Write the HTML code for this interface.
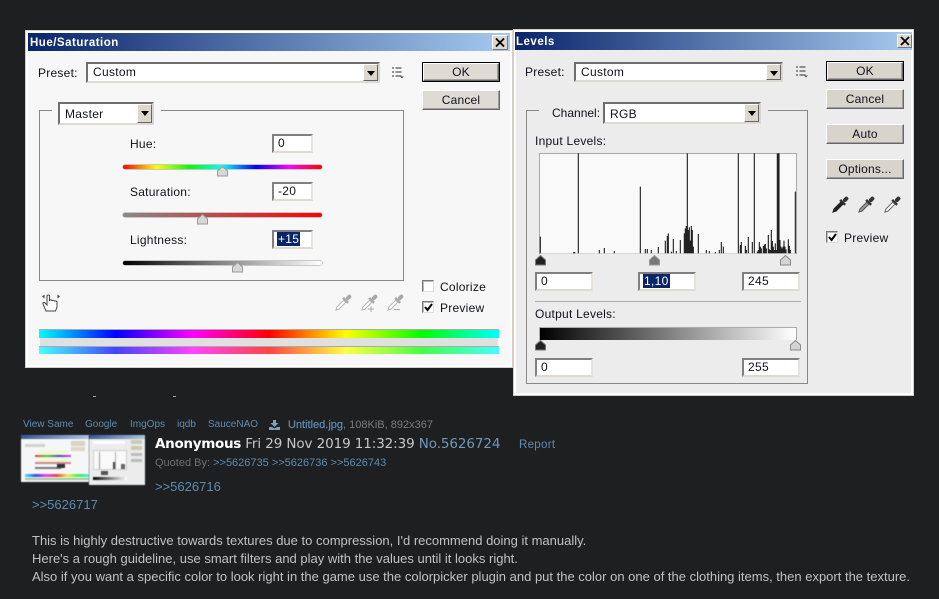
<!DOCTYPE html>
<html><head><meta charset="utf-8"><style>
html,body{margin:0;padding:0;background:#1d1f21;width:939px;height:599px;overflow:hidden}
div,span,svg{position:absolute;box-sizing:border-box}
span.i{position:static}
.t{font:12px/14px "Liberation Sans",sans-serif;color:#10101c;white-space:nowrap;letter-spacing:.25px}
.dlg{border:1px solid #fff;outline:1px solid #d4d0c8}
.title{background:linear-gradient(90deg,#0a246a,#a6caf0);color:#fff;font:bold 11.5px/20px "Liberation Sans",sans-serif;padding-left:2px;letter-spacing:.5px}
.inp{background:#fff;border:2px solid;border-color:#808080 #e6e4dc #dcdad2 #808080;font:12px/15px "Liberation Sans",sans-serif;color:#10101c;padding-left:4px;letter-spacing:.3px}
.sel{background:#fff;border:2px solid;border-color:#6e6e6e #d8d6ce #dcdad2 #6e6e6e;font:12px/17px "Liberation Sans",sans-serif;color:#10101c;padding-left:5px;letter-spacing:.3px}
.arr{right:0;top:0;bottom:0;width:15px;background:#dcd8d0;border:1px solid;border-color:#fff #666 #666 #fff}
.arr:after{content:"";position:absolute;left:3px;top:6px;border:4px solid transparent;border-top:5px solid #000;border-bottom:0}
.btn{background:#dedad4;border:1px solid;border-color:#fff #666 #666 #fff;font:12px/18px "Liberation Sans",sans-serif;color:#10101c;text-align:center;letter-spacing:.2px;box-shadow:inset -1px -1px 0 #a0a0a0}
.def{outline:1px solid #000;line-height:16px}
.x{background:#dcd8d0;border:1px solid;border-color:#fff #777 #777 #fff}
.chk{width:12px;height:12px;background:#fff;border:1px solid;border-color:#777 #ddd #ddd #777;box-shadow:inset 1px 1px 0 #bbb}
.sl{height:4px;border-radius:2px;box-shadow:0 0 0 .5px #999}
.f{background:#888}
.p{font:12px/14px "Liberation Sans",sans-serif;white-space:nowrap}
.l{color:#5f8bb0}
</style></head><body>

<!-- Hue/Saturation -->
<div class="dlg" style="left:26px;top:31px;width:486px;height:336px;background:#f7f7f7;border-width:2px"></div>
<div class="title" style="left:28px;top:33px;width:482px;height:18px">Hue/Saturation</div>
<div class="x" style="left:492px;top:35px;width:16px;height:15px"><svg style="left:2px;top:1px" width="10" height="11"><path d="M1 1.500L9 9.500M9 1.500L1 9.500" stroke="#000" stroke-width="1.800"/></svg></div>
<div class="t" style="left:38px;top:66px">Preset:</div>
<div class="sel" style="left:86px;top:62px;width:294px;height:21px">Custom<div class="arr"></div></div>
<svg style="left:391px;top:66px" width="14" height="13"><path d="M1 2h2M1 6h2M1 10h2M4.500 2h6M4.500 6h6M4.500 10h6" stroke="#555" stroke-width="1.300"/><path d="M9 10.500h4l-2 2z" fill="#555"/></svg>
<div class="btn def" style="left:423px;top:63px;width:76px;height:18px">OK</div>
<div class="btn" style="left:422px;top:90px;width:78px;height:20px">Cancel</div>

<div class="f" style="left:39px;top:110px;width:1px;height:171px"></div>
<div class="f" style="left:39px;top:280px;width:365px;height:1px"></div>
<div class="f" style="left:403px;top:110px;width:1px;height:171px"></div>
<div class="f" style="left:39px;top:110px;width:13px;height:1px"></div>
<div class="f" style="left:161px;top:110px;width:243px;height:1px"></div>
<div class="sel" style="left:58px;top:102px;width:96px;height:23px;line-height:20px">Master<div class="arr"></div></div>

<div class="t" style="left:130px;top:137px">Hue:</div>
<div class="inp" style="left:272px;top:134px;width:41px;height:19px">0</div>
<div class="sl" style="left:123px;top:165px;width:199px;background:linear-gradient(90deg,#f00,#ff0,#0f0,#0ff,#00f,#f0f,#f00)"></div>
<svg style="left:217px;top:166px" width="11" height="11"><path d="M.5 5L5.500.5 10.500 5V10H.5z" fill="#d8d8d8" stroke="#9a9a9a"/></svg>

<div class="t" style="left:130px;top:185px">Saturation:</div>
<div class="inp" style="left:272px;top:182px;width:41px;height:19px">-20</div>
<div class="sl" style="left:123px;top:213px;width:199px;background:linear-gradient(90deg,#888,#f00)"></div>
<svg style="left:197px;top:214px" width="11" height="11"><path d="M.5 5L5.500.5 10.500 5V10H.5z" fill="#d8d8d8" stroke="#9a9a9a"/></svg>

<div class="t" style="left:130px;top:233px">Lightness:</div>
<div class="inp" style="left:272px;top:230px;width:41px;height:19px;padding-left:3px"><span style="position:static;background:#0a246a;color:#fff;padding:0 1px">+15</span></div>
<div class="sl" style="left:123px;top:261px;width:199px;background:linear-gradient(90deg,#000,#888 50%,#fff)"></div>
<svg style="left:232px;top:262px" width="11" height="11"><path d="M.5 5L5.500.5 10.500 5V10H.5z" fill="#d8d8d8" stroke="#9a9a9a"/></svg>

<svg style="left:41px;top:293px" width="20" height="20"><path d="M1 3.500L3.500 1.500V5.500zM19 3.500L16.500 1.500V5.500z" fill="#444"/><path d="M5 18L2 11c-.5-1.500 1-2 2-1l2 2V3.500c0-2 2.500-2 2.500 0V8c0-1.500 2.500-1.500 2.500 0 0-1 2.500-1 2.500.5 0-.8 2.500-.8 2.500 1V14l-1.500 4z" fill="#fff" stroke="#444"/></svg>

<svg style="left:334px;top:294px" width="18" height="18"><g transform="rotate(45 9 9)"><rect x="7" y="-2" width="4" height="6" rx="2" fill="#a8a8a8"/><rect x="5.500" y="4" width="7" height="2.500" fill="#a8a8a8"/><path d="M7.500 6.500V16L9 19l1.500-3V6.500z" fill="#fff" stroke="#b4b4b4"/></g></svg>
<svg style="left:360px;top:294px" width="18" height="18"><g transform="rotate(45 9 9)"><rect x="7" y="-2" width="4" height="6" rx="2" fill="#a8a8a8"/><rect x="5.500" y="4" width="7" height="2.500" fill="#a8a8a8"/><path d="M7.500 6.500V16L9 19l1.500-3V6.500z" fill="#fff" stroke="#b4b4b4"/></g><path d="M8 15h6M11 12.500v5.500" stroke="#a8a8a8"/></svg>
<svg style="left:386px;top:294px" width="18" height="18"><g transform="rotate(45 9 9)"><rect x="7" y="-2" width="4" height="6" rx="2" fill="#a8a8a8"/><rect x="5.500" y="4" width="7" height="2.500" fill="#a8a8a8"/><path d="M7.500 6.500V16L9 19l1.500-3V6.500z" fill="#fff" stroke="#b4b4b4"/></g><path d="M8 15.500h6" stroke="#a8a8a8"/></svg>

<div class="chk" style="left:422px;top:280px"></div>
<div class="t" style="left:440px;top:280px">Colorize</div>
<div class="chk" style="left:422px;top:301px"></div>
<svg style="left:423px;top:302px" width="11" height="11"><path d="M2 5l2.500 3L9 2" fill="none" stroke="#000" stroke-width="2"/></svg>
<div class="t" style="left:440px;top:301px">Preview</div>

<div style="left:39px;top:329px;width:460px;height:9px;border-top:1px solid #aaa;background:linear-gradient(90deg,#0ff,#00f,#f0f,#f00,#ff0,#0f0,#0ff)"></div>
<div style="left:40px;top:338px;width:458px;height:8px;background:#e0e0e0"></div>
<div style="left:39px;top:346px;width:460px;height:8px;border-top:1px solid #aaa;background:linear-gradient(90deg,#4ff,#44f,#f4f,#f44,#ff4,#4f4,#4ff)"></div>

<!-- Levels -->
<div class="dlg" style="left:514px;top:30px;width:399px;height:365px;background:#ececec;border-width:2px"></div>
<div class="title" style="left:515px;top:32px;width:397px;height:18px;padding-left:1px">Levels</div>
<div class="x" style="left:897px;top:34px;width:15px;height:14px"><svg style="left:2px;top:1px" width="10" height="10"><path d="M1 1L9 9M9 1L1 9" stroke="#000" stroke-width="1.800"/></svg></div>
<div class="t" style="left:525px;top:65px">Preset:</div>
<div class="sel" style="left:574px;top:62px;width:209px;height:20px">Custom<div class="arr"></div></div>
<svg style="left:795px;top:65px" width="14" height="13"><path d="M1 2h2M1 6h2M1 10h2M4.500 2h6M4.500 6h6M4.500 10h6" stroke="#555" stroke-width="1.300"/><path d="M9 10.500h4l-2 2z" fill="#555"/></svg>

<div class="f" style="left:526px;top:110px;width:1px;height:274px"></div>
<div class="f" style="left:526px;top:383px;width:282px;height:1px"></div>
<div class="f" style="left:807px;top:110px;width:1px;height:274px"></div>
<div class="f" style="left:526px;top:110px;width:13px;height:1px"></div>
<div class="f" style="left:768px;top:110px;width:40px;height:1px"></div>
<div class="t" style="left:552px;top:106px;letter-spacing:0">Channel:</div>
<div class="sel" style="left:603px;top:102px;width:158px;height:22px;line-height:20px">RGB<div class="arr"></div></div>
<div class="t" style="left:535px;top:134px">Input Levels:</div>

<div style="left:539px;top:153px;width:258px;height:101px;background:#f9f9f9;border:1px solid #aaa;border-bottom:0"></div>
<svg style="left:530px;top:150px" width="280" height="145" viewBox="0 0 840 435"><path stroke="#222" stroke-width="3.400" fill="none" d="M31 260V310M131 306V310M134 306V310M145 10V310M208 300V310M223 294V310M253 303V310M331 110V310M346 297V310M352 297V310M364 300V310M385 291V310M406 272V310M412 258V310M415 250V310M424 305V310M430 267V310M439 303V310M451 270V310M463 250V310M466 235V310M469 228V310M472 10V310M475 240V310M478 232V310M481 272V310M484 228V310M487 240V310M490 290V310M505 252V310M529 300V310M538 303V310M556 306V310M568 300V310M574 276V310M580 290V310M625 10V310M631 285V310M634 276V310M646 288V310M649 300V310M655 261V310M667 276V310M673 10V310M682 305V310M685 300V310M688 276V310M691 290V310M694 295V310M700 288V310M703 284V310M706 282V310M709 295V310M715 255V310M718 298V310M721 300V310M724 240V310M727 273V310M730 290V310M733 300V310M736 280V310M739 300V310M742 10V310M745 10V310M747 10V310M750 270V310M753 290V310M756 295V310M759 290V310M762 272V310M765 290V310M768 298V310M775 268V310M778 288V310M781 300V310M796 125V310"/><path stroke="#999" stroke-width="1" d="M28 310.500H800"/></svg>

<svg style="left:535px;top:255px" width="11" height="11"><path d="M.5 5L5.500.5 10.500 5V10H.5z" fill="#222" stroke="#777"/></svg>
<svg style="left:649px;top:255px" width="11" height="11"><path d="M.5 5L5.500.5 10.500 5V10H.5z" fill="#777" stroke="#999"/></svg>
<svg style="left:780px;top:255px" width="11" height="11"><path d="M.5 5L5.500.5 10.500 5V10H.5z" fill="#d4d4d4" stroke="#8a8a8a"/></svg>

<div class="inp" style="left:535px;top:272px;width:58px;height:19px">0</div>
<div class="inp" style="left:638px;top:272px;width:58px;height:19px;padding-left:3px"><span style="position:static;background:#0a246a;color:#fff;padding:0 1px">1,10</span></div>
<div class="inp" style="left:742px;top:272px;width:58px;height:19px">245</div>
<div style="left:535px;top:301px;width:266px;height:1px;background:#aaa"></div>
<div class="t" style="left:535px;top:307px">Output Levels:</div>
<div style="left:539px;top:327px;width:258px;height:13px;border:1px solid #aaa;border-bottom:0;background:linear-gradient(90deg,#000,#fff)"></div>
<svg style="left:535px;top:340px" width="11" height="11"><path d="M.5 5L5.500.5 10.500 5V10H.5z" fill="#222" stroke="#777"/></svg>
<svg style="left:790px;top:340px" width="11" height="11"><path d="M.5 5L5.500.5 10.500 5V10H.5z" fill="#d4d4d4" stroke="#8a8a8a"/></svg>
<div class="inp" style="left:535px;top:358px;width:58px;height:19px">0</div>
<div class="inp" style="left:742px;top:358px;width:58px;height:19px">255</div>

<div class="btn def" style="left:827px;top:62px;width:76px;height:18px;background:#d8d4cc">OK</div>
<div class="btn" style="left:826px;top:89px;width:78px;height:20px;background:#d8d4cc">Cancel</div>
<div class="btn" style="left:826px;top:124px;width:78px;height:20px;background:#d8d4cc">Auto</div>
<div class="btn" style="left:826px;top:159px;width:78px;height:20px;background:#d8d4cc">Options...</div>
<svg style="left:831px;top:196px" width="18" height="18"><g transform="rotate(45 9 9)"><rect x="7" y="-2" width="4" height="6" rx="2" fill="#333"/><rect x="5.500" y="4" width="7" height="2.500" fill="#333"/><path d="M7.500 6.500V16L9 19l1.500-3V6.500z" fill="#222" stroke="#222"/></g></svg>
<svg style="left:857px;top:196px" width="18" height="18"><g transform="rotate(45 9 9)"><rect x="7" y="-2" width="4" height="6" rx="2" fill="#333"/><rect x="5.500" y="4" width="7" height="2.500" fill="#333"/><path d="M7.500 6.500V16L9 19l1.500-3V6.500z" fill="#999" stroke="#555"/></g></svg>
<svg style="left:883px;top:196px" width="18" height="18"><g transform="rotate(45 9 9)"><rect x="7" y="-2" width="4" height="6" rx="2" fill="#333"/><rect x="5.500" y="4" width="7" height="2.500" fill="#333"/><path d="M7.500 6.500V16L9 19l1.500-3V6.500z" fill="#fff" stroke="#666"/></g></svg>
<div class="chk" style="left:826px;top:231px"></div>
<svg style="left:827px;top:232px" width="11" height="11"><path d="M2 5l2.500 3L9 2" fill="none" stroke="#000" stroke-width="2"/></svg>
<div class="t" style="left:844px;top:231px">Preview</div>

<!-- specks -->
<div style="left:93px;top:396px;width:3px;height:1px;background:#aaa"></div>
<div style="left:173px;top:396px;width:3px;height:1px;background:#aaa"></div>

<!-- post -->
<div class="p l" style="left:23px;top:418px;font-size:10px">View Same</div>
<div class="p l" style="left:85px;top:418px;font-size:10px">Google</div>
<div class="p l" style="left:130px;top:418px;font-size:10px">ImgOps</div>
<div class="p l" style="left:177px;top:418px;font-size:10px">iqdb</div>
<div class="p l" style="left:208px;top:418px;font-size:10px">SauceNAO</div>
<svg style="left:269px;top:420px" width="11" height="10"><path d="M4 0h3v3h2.500L5.500 7 1.500 3H4zM0 7h3l2.500 1.500L8 7h3v3H0z" fill="#7f9fba"/></svg>
<div class="p" style="left:288px;top:418px;font-size:11px;color:#7a7d7f"><span class="i" style="color:#5f8bb0;-webkit-text-stroke:.2px #5f8bb0">Untitled.jpg</span>, 108KiB, 892x367</div>

<!-- thumb -->
<div style="left:21px;top:435px;width:68px;height:47px;background:#f4f6f8;overflow:hidden;filter:blur(.5px)">
 <div style="left:0;top:0;width:68px;height:4px;background:linear-gradient(90deg,#38588f,#a9c4e4)"></div>
 <div style="left:4px;top:9px;width:20px;height:3px;background:#cfd4c8"></div>
 <div style="left:50px;top:6px;width:14px;height:5px;background:#d8d4c0"></div>
 <div style="left:50px;top:12px;width:14px;height:4px;background:#ddd8c8"></div>
 <div style="left:16px;top:15px;width:30px;height:12px;background:#f4f6d8"></div>
 <div style="left:14px;top:20px;width:36px;height:2px;background:linear-gradient(90deg,#d44,#4c4,#44d,#d4d)"></div>
 <div style="left:14px;top:27px;width:36px;height:2px;background:#c88"></div>
 <div style="left:14px;top:32px;width:26px;height:2px;background:#777"></div>
 <div style="left:36px;top:29px;width:8px;height:4px;background:#333"></div>
 <div style="left:4px;top:39px;width:64px;height:3px;background:linear-gradient(90deg,#4ee,#44e,#e4e,#e44,#ee4,#4e4,#4ee)"></div>
 <div style="left:4px;top:43px;width:64px;height:2px;background:#9c9"></div>
</div>
<div style="left:89px;top:435px;width:56px;height:50px;background:#ececec;overflow:hidden;filter:blur(.5px)">
 <div style="left:0;top:0;width:56px;height:4px;background:linear-gradient(90deg,#38588f,#a9c4e4)"></div>
 <div style="left:4px;top:6px;width:32px;height:3px;background:#fff"></div>
 <div style="left:42px;top:5px;width:11px;height:4px;background:#cdc8b0"></div>
 <div style="left:42px;top:11px;width:11px;height:4px;background:#cdc8b0"></div>
 <div style="left:42px;top:18px;width:11px;height:3px;background:#bbb"></div>
 <div style="left:42px;top:24px;width:11px;height:3px;background:#bbb"></div>
 <div style="left:4px;top:15px;width:34px;height:20px;background:#f9f9f9;border:1px solid #ccc"></div>
 <div style="left:24px;top:27px;width:3px;height:7px;background:#444"></div>
 <div style="left:32px;top:29px;width:4px;height:5px;background:#666"></div>
 <div style="left:10px;top:17px;width:1px;height:17px;background:#999"></div>
 <div style="left:26px;top:17px;width:1px;height:17px;background:#aaa"></div>
 <div style="left:12px;top:36px;width:7px;height:4px;background:#555"></div>
 <div style="left:4px;top:42px;width:34px;height:3px;background:linear-gradient(90deg,#000,#fff)"></div>
</div>

<div class="p" style="left:155px;top:436px;font:13.500px/16px 'DejaVu Sans',sans-serif;color:#c5c8c6;letter-spacing:-.1px"><span class="i" style="color:#fff;font-weight:bold;letter-spacing:-.3px">Anonymous</span> Fri 29 Nov 2019 11:32:39 <span class="i" style="color:#6f97b8">No.5626724</span></div>
<div class="p l" style="left:519px;top:438px;font-size:11.500px;letter-spacing:.3px">Report</div>
<div class="p" style="left:155px;top:456px;font-size:11px;color:#6e7173">Quoted By: <span class="i l">&gt;&gt;5626735 &gt;&gt;5626736 &gt;&gt;5626743</span></div>
<div class="p l" style="left:155px;top:480px;font-size:13px">&gt;&gt;5626716</div>
<div class="p l" style="left:32px;top:498px;font-size:13px">&gt;&gt;5626717</div>
<div class="p" style="left:32px;top:532px;font-size:13px;line-height:18px;color:#c0c3c1">This is highly destructive towards textures due to compression, I'd recommend doing it manually.<br>Here's a rough guideline, use smart filters and play with the values until it looks right.<br>Also if you want a specific color to look right in the game use the colorpicker plugin and put the color on one of the clothing items, then export the texture.</div>
</body></html>
